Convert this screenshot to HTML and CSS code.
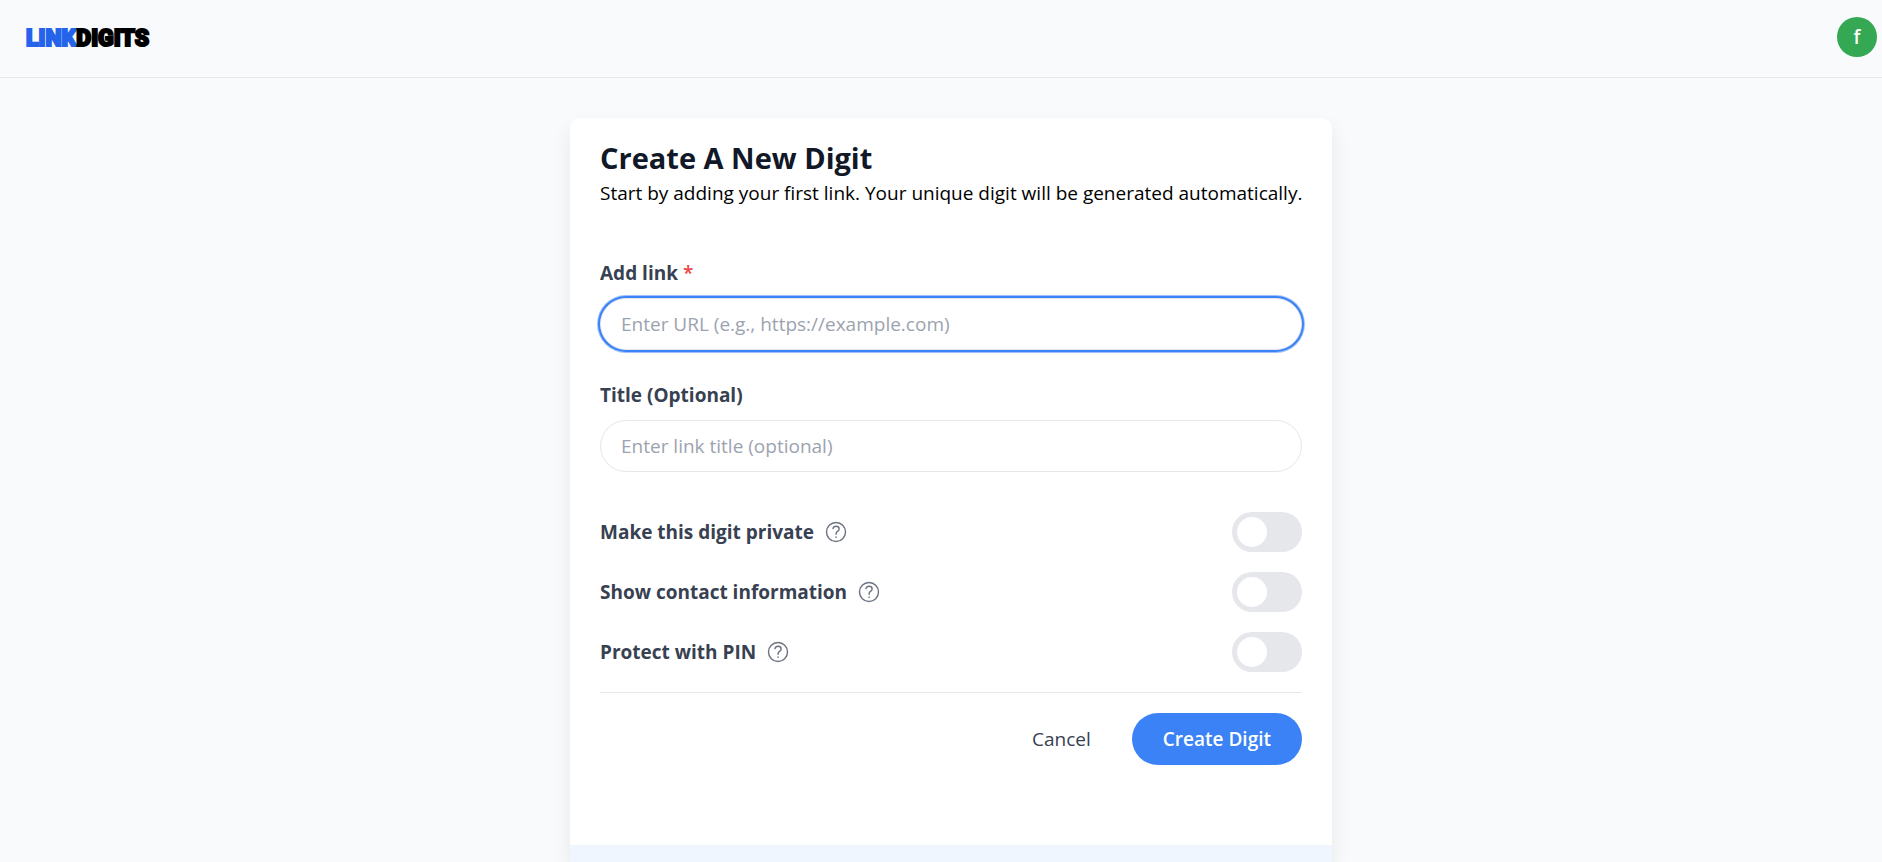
FILE: index.html
```html
<!DOCTYPE html>
<html lang="en">
<head>
    <meta charset="utf-8">
    <meta name="viewport" content="width=device-width, initial-scale=1">
    <title>LinkDigits - Create A New Digit</title>
    <link rel="stylesheet" href="styles.css">
</head>
<body>
    <header class="header">
        <a class="logo" href="#"><span class="logo-link">LINK</span>DIGITS</a>
        <button type="button" class="avatar">f</button>
    </header>

    <main class="page">
        <div class="card">
            <form class="card-body">
                <h1 class="title">Create A New Digit</h1>
                <p class="subtitle">Start by adding your first link. Your unique digit will be generated automatically.</p>

                <div class="field">
                    <label for="link-url">Add link <span class="required">*</span></label>
                    <input class="text-input active" type="text" id="link-url" placeholder="Enter URL (e.g., https://example.com)">
                </div>

                <div class="field">
                    <label for="link-title">Title (Optional)</label>
                    <input class="text-input" type="text" id="link-title" placeholder="Enter link title (optional)">
                </div>

                <div class="toggles">
                    <div class="toggle-row">
                        <label for="private">Make this digit private</label>
                        <svg class="help" viewBox="0 0 22 22"><circle cx="11" cy="11" r="9.5"/><path d="M8 7.6C8.4 6.1 9.5 5.3 11 5.3c1.8 0 3.1 1 3.1 2.6 0 1.2-.7 1.9-1.6 2.5-.9.6-1.4 1.1-1.4 2.3v.6M11.1 15.9v.5"/></svg>
                        <input class="switch" type="checkbox" id="private">
                    </div>
                    <div class="toggle-row">
                        <label for="contact">Show contact information</label>
                        <svg class="help" viewBox="0 0 22 22"><circle cx="11" cy="11" r="9.5"/><path d="M8 7.6C8.4 6.1 9.5 5.3 11 5.3c1.8 0 3.1 1 3.1 2.6 0 1.2-.7 1.9-1.6 2.5-.9.6-1.4 1.1-1.4 2.3v.6M11.1 15.9v.5"/></svg>
                        <input class="switch" type="checkbox" id="contact">
                    </div>
                    <div class="toggle-row">
                        <label for="pin">Protect with PIN</label>
                        <svg class="help" viewBox="0 0 22 22"><circle cx="11" cy="11" r="9.5"/><path d="M8 7.6C8.4 6.1 9.5 5.3 11 5.3c1.8 0 3.1 1 3.1 2.6 0 1.2-.7 1.9-1.6 2.5-.9.6-1.4 1.1-1.4 2.3v.6M11.1 15.9v.5"/></svg>
                        <input class="switch" type="checkbox" id="pin">
                    </div>
                </div>

                <div class="actions">
                    <button type="button" class="btn">Cancel</button>
                    <button type="submit" class="btn btn-primary">Create Digit</button>
                </div>
            </form>
            <div class="card-footer"></div>
        </div>
    </main>
</body>
</html>
```
FILE: styles.css
```css
* {
    box-sizing: border-box;
}

body {
    display: flex;
    flex-direction: column;
    min-height: 100vh;
    margin: 0;
    background: #f9fafb;
    color: #000;
    font-family: "Segoe UI", "Open Sans", sans-serif;
    font-size: 19px;
    line-height: 30px;
}

input,
button {
    font: inherit;
}

.header {
    display: flex;
    align-items: center;
    justify-content: space-between;
    padding: 17px 5px 20px 26px;
    border-bottom: 1px solid #e5e7eb;
}

.logo {
    padding-top: 4px;
    color: #000;
    font-family: Impact, Roboto, sans-serif;
    font-size: 23px;
    font-weight: 900;
    text-decoration: none;
    -webkit-text-stroke: 2px;
}

.logo-link {
    color: #2563eb;
}

.avatar {
    width: 40px;
    height: 40px;
    padding: 0;
    border: none;
    border-radius: 50%;
    background: #34a853;
    color: #fff;
    font-weight: 600;
}

.page {
    display: flex;
    flex: 1;
    justify-content: center;
    padding: 40px 0 0 20px;
}

.card {
    display: flex;
    flex-direction: column;
    width: 100%;
    max-width: 762px;
    border-radius: 10px 10px 0 0;
    background: #fff;
    box-shadow: 0 10px 20px rgba(0, 0, 0, 0.08);
}

.card-body {
    padding: 20px 30px 80px;
}

.title {
    margin: 0;
    color: #111827;
    font-size: 29px;
    font-weight: bold;
    line-height: 40px;
}

.subtitle {
    margin: 0 0 50px;
    white-space: nowrap;
}

.field {
    margin-bottom: 30px;
}

.field label {
    display: block;
    margin-bottom: 10px;
}

label {
    color: #374151;
    font-weight: bold;
}

.required {
    color: #ef4444;
    font-weight: 600;
}

.text-input {
    display: block;
    width: 100%;
    height: 52px;
    padding: 10px 20px;
    border: 1px solid #e5e7eb;
    border-radius: 26px;
    outline: none;
    background: #fff;
}

.text-input::placeholder {
    color: #9ca3af;
}

.text-input.active,
.text-input:focus {
    box-shadow: 0 0 0 2px #3b82f6, 0 0 0 3px rgba(59, 130, 246, 0.5);
}

.toggles {
    display: flex;
    flex-direction: column;
    gap: 20px;
    margin-top: 40px;
}

.toggle-row {
    display: flex;
    align-items: center;
    gap: 11px;
}

.help {
    width: 22px;
    height: 22px;
    fill: none;
    stroke: #6b7280;
    stroke-width: 1.4;
    stroke-linecap: round;
}

.switch {
    appearance: none;
    width: 70px;
    height: 40px;
    margin: 0 0 0 auto;
    padding: 5px;
    border-radius: 20px;
    background: #e5e7eb;
    cursor: pointer;
}

.switch::before {
    content: "";
    display: block;
    width: 30px;
    height: 30px;
    border-radius: 50%;
    background: #fff;
}

.switch:checked {
    background: #3b82f6;
}

.switch:checked::before {
    margin-left: auto;
}

.actions {
    display: flex;
    justify-content: flex-end;
    gap: 10px;
    margin-top: 20px;
    padding-top: 20px;
    border-top: 1px solid #e5e7eb;
}

.btn {
    height: 52px;
    padding: 0 31px;
    border: none;
    border-radius: 26px;
    background: none;
    color: #374151;
    cursor: pointer;
}

.btn-primary {
    background: #3b82f6;
    color: #fff;
    font-weight: 600;
}

.card-footer {
    flex: 1;
    background: #eff6ff;
}
```
